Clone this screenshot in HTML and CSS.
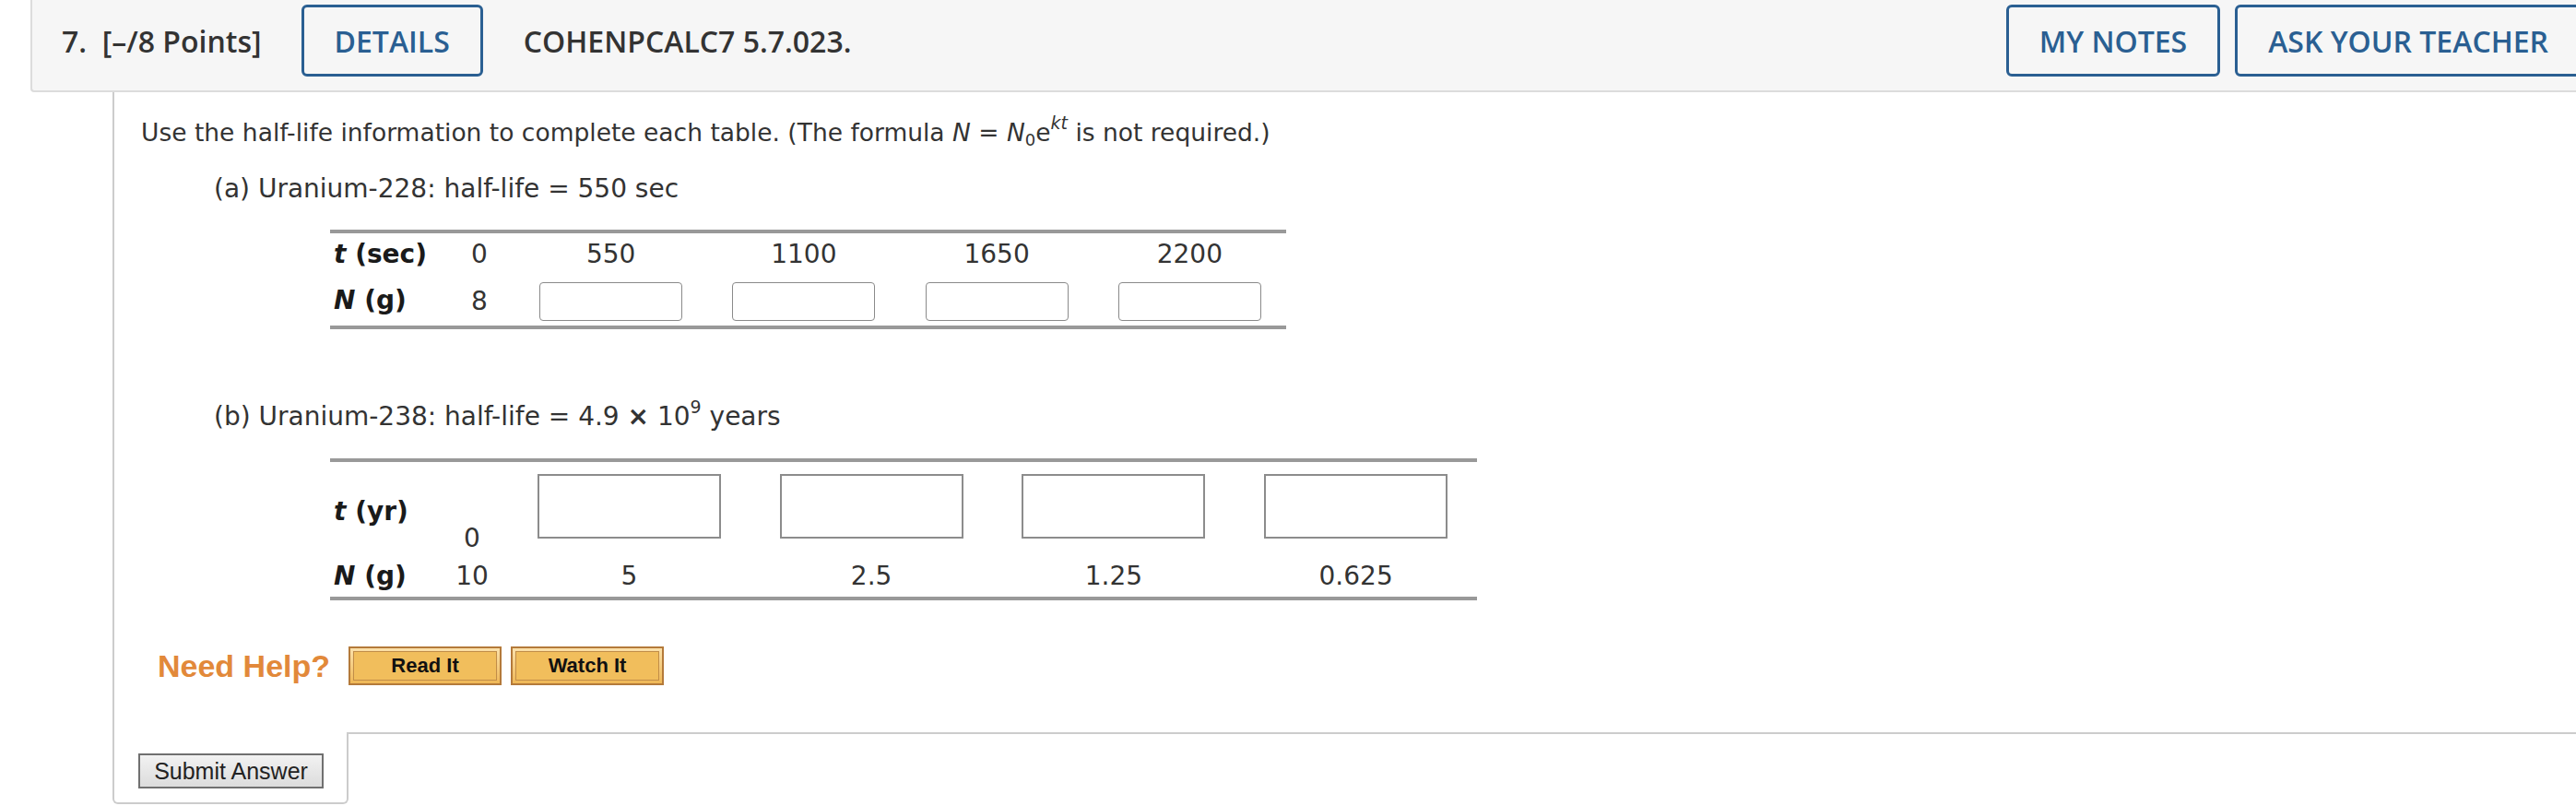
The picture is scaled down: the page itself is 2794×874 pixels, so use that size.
FILE: index.html
```html
<!DOCTYPE html>
<html lang="en">
<head>
<meta charset="utf-8">
<title>Question 7</title>
<link rel="stylesheet" href="styles.css">
</head>
<body>
<div class="question">
  <div class="q-header">
    <span class="q-title">7.&nbsp; [–/8 Points]</span>
    <button class="hbtn">DETAILS</button>
    <span class="q-code">COHENPCALC7 5.7.023.</span>
    <div class="hright">
      <button class="hbtn">MY NOTES</button>
      <button class="hbtn">ASK YOUR TEACHER</button>
    </div>
  </div>
  <div class="q-body">
    <div class="q-content">
      <p class="intro">Use the half-life information to complete each table. (The formula <i>N</i> = <i>N</i><sub>0</sub>e<sup><i>kt</i></sup> is not required.)</p>
      <p class="part">(a) Uranium-228: half-life = 550 sec</p>
      <table class="tbl tbl-a">
        <colgroup><col class="c-lab-a"><col class="c-zero-a"><col><col><col><col></colgroup>
        <tr class="ra1">
          <th><i>t</i> (sec)</th><td>0</td><td>550</td><td>1100</td><td>1650</td><td>2200</td>
        </tr>
        <tr class="ra2">
          <th><i>N</i> (g)</th><td>8</td>
          <td><input class="in-a" type="text"></td>
          <td><input class="in-a" type="text"></td>
          <td><input class="in-a" type="text"></td>
          <td><input class="in-a" type="text"></td>
        </tr>
      </table>
      <p class="part part-b">(b) Uranium-238: half-life = 4.9 <b class="times">×</b> 10<sup>9</sup> years</p>
      <table class="tbl tbl-b">
        <colgroup><col class="c-lab-b"><col class="c-zero-b"><col><col><col><col></colgroup>
        <tr class="rb1">
          <th class="lab-yr"><i>t</i> (yr)</th><td class="zero-b">0</td>
          <td><input class="in-b" type="text"></td>
          <td><input class="in-b" type="text"></td>
          <td><input class="in-b" type="text"></td>
          <td><input class="in-b" type="text"></td>
        </tr>
        <tr class="rb2">
          <th><i>N</i> (g)</th><td>10</td><td>5</td><td>2.5</td><td>1.25</td><td>0.625</td>
        </tr>
      </table>
      <div class="help">
        <span class="need">Need Help?</span>
        <button class="obtn"><span>Read It</span></button>
        <button class="obtn"><span>Watch It</span></button>
      </div>
    </div>
    <div class="q-foot">
      <div class="tab"><button class="submit">Submit Answer</button></div>
      <div class="filler"></div>
    </div>
  </div>
</div>
</body>
</html>
```
FILE: styles.css
```css
html, body {
  margin: 0;
  padding: 0;
  background: #ffffff;
  overflow: hidden;
}
body {
  width: 2794px;
  height: 874px;
  font-family: "DejaVu Sans", Verdana, sans-serif;
  color: #333333;
}
.question {
  margin-left: 33px;
  width: 2790px;
}
.q-header {
  height: 100px;
  background: #f6f6f6;
  border-left: 2px solid #dcdcdc;
  border-bottom: 2px solid #dcdcdc;
  border-bottom-left-radius: 4px;
  display: flex;
  align-items: center;
  padding-left: 32px;
  padding-right: 23px;
  font-family: "Open Sans", "DejaVu Sans", sans-serif;
  font-weight: 600;
  font-size: 32px;
  color: #333333;
  box-sizing: border-box;
}
.q-header .q-title {
  margin-right: 43px;
  margin-top: -10px;
}
.q-header .q-code {
  margin-left: 44px;
  margin-top: -10px;
}
.hbtn {
  font-family: "Open Sans", "DejaVu Sans", sans-serif;
  font-weight: 600;
  font-size: 32px;
  color: #2a5f92;
  background: #f6f6f6;
  border: 3px solid #2a5f92;
  border-radius: 6px;
  height: 78px;
  padding: 0 33px;
  margin-top: -10px;
}
.hright {
  margin-left: auto;
  display: flex;
  gap: 16px;
}
.q-body {
  margin-left: 89px;
}
.q-content {
  border-left: 2px solid #cccccc;
  padding: 26px 0 51px 29px;
  font-size: 26.5px;
  line-height: 36px;
}
.intro {
  margin: 0;
}
.intro sub {
  font-size: 18px;
  line-height: 0;
  vertical-align: -5px;
}
.intro sup, .part sup {
  font-size: 19px;
  line-height: 0;
  vertical-align: 13px;
}
.part {
  margin: 25px 0 0 79px;
  font-size: 28px;
}
.part-b {
  margin-top: 77px;
}
.times {
  font-weight: bold;
}
.tbl {
  margin-left: 205px;
  border-collapse: separate;
  border-spacing: 0;
  table-layout: fixed;
  border-top: 4px solid #999999;
  border-bottom: 4px solid #999999;
  margin-top: 26px;
  font-size: 28px;
}
.tbl th {
  text-align: left;
  font-weight: bold;
  padding: 0 0 0 4px;
  color: #1a1a1a;
}
.tbl td {
  text-align: center;
  padding: 0;
}
.tbl-a { width: 1037px; }
.c-lab-a { width: 124px; }
.c-zero-a { width: 76px; }
.ra1 th, .ra1 td { height: 46px; }
.ra2 th, .ra2 td { height: 54px; }
.ra2 td { padding-top: 2px; box-sizing: border-box; }
.in-a {
  width: 155px;
  height: 42px;
  box-sizing: border-box;
  border: 1px solid #8a8a8a;
  border-radius: 4px;
  display: block;
  margin: 0 auto;
  background: #ffffff;
}
.tbl-b {
  width: 1244px;
  margin-top: 27px;
}
.c-lab-b { width: 115px; }
.c-zero-b { width: 78px; }
.rb1 td { padding-top: 13px; padding-bottom: 19px; height: 70px; }
.rb1 .lab-yr { padding-top: 6px; vertical-align: middle; }
.rb1 .zero-b {
  vertical-align: bottom;
  padding: 0 0 5px 0;
  line-height: 28px;
}
.rb2 th, .rb2 td { height: 44px; }
.in-b {
  width: 199px;
  height: 70px;
  box-sizing: border-box;
  border: 2px solid #8c8c8c;
  border-radius: 0;
  display: block;
  margin: 0 auto;
  background: #ffffff;
}
.help {
  margin-top: 50px;
  margin-left: 18px;
  display: flex;
  align-items: center;
  height: 42px;
}
.need {
  font-family: "Liberation Sans", Arial, sans-serif;
  font-weight: bold;
  font-size: 34px;
  color: #e2893a;
  margin-right: 20px;
}
.obtn {
  width: 166px;
  height: 42px;
  margin-right: 10px;
  padding: 3px;
  border: 2px solid #b47a3a;
  background: linear-gradient(#fbe1ab, #efb857);
  box-sizing: border-box;
  display: flex;
}
.obtn span {
  flex: 1;
  border: 1px solid #c18d48;
  background: #f1be5c;
  font-family: "Liberation Sans", Arial, sans-serif;
  font-weight: bold;
  font-size: 22px;
  color: #111111;
  display: flex;
  align-items: center;
  justify-content: center;
}
.q-foot {
  display: flex;
}
.tab {
  border-left: 2px solid #cccccc;
  border-right: 2px solid #cccccc;
  border-bottom: 2px solid #cccccc;
  border-bottom-left-radius: 6px;
  border-bottom-right-radius: 6px;
  padding: 23px 25px 15px 26px;
  width: 201px;
}
.filler {
  flex: 1;
  border-top: 2px solid #cccccc;
}
.submit {
  width: 201px;
  height: 38px;
  border: 2px solid #707070;
  background: linear-gradient(#f2f2f2, #dcdcdc);
  font-family: "Liberation Sans", Arial, sans-serif;
  font-size: 25px;
  color: #222222;
  padding: 0;
  display: block;
}
```
